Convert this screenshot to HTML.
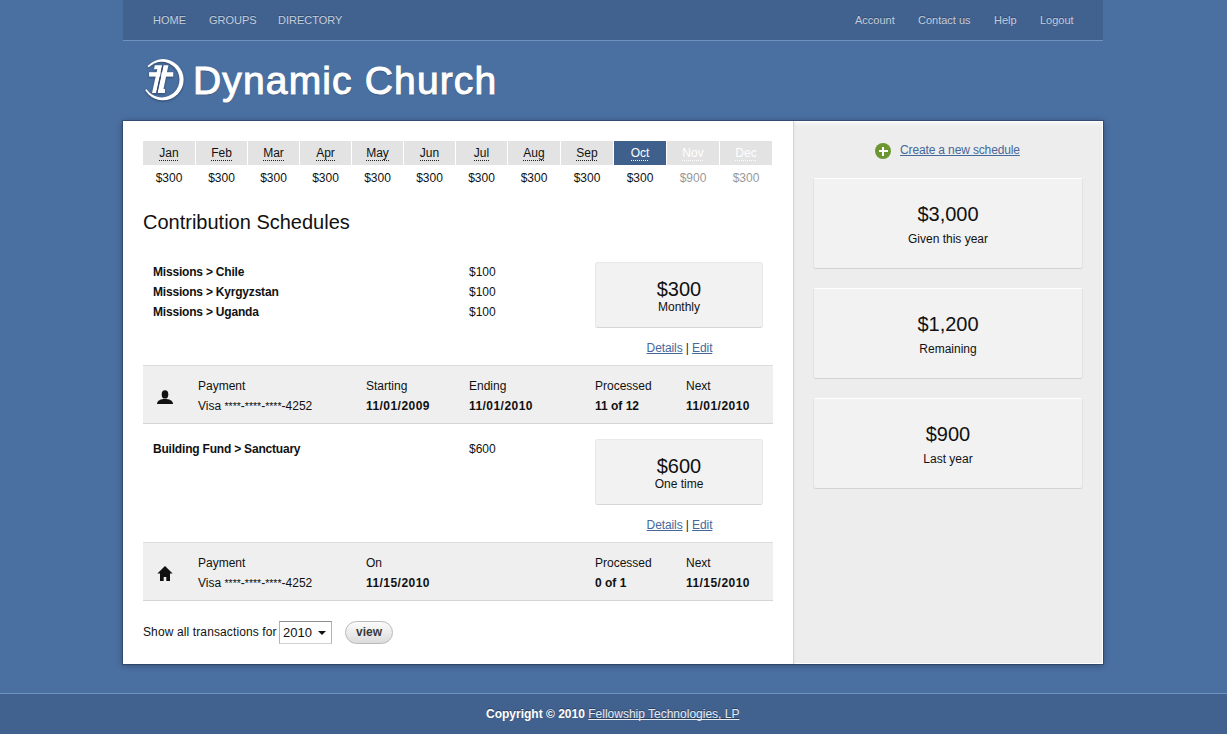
<!DOCTYPE html>
<html><head><meta charset="utf-8">
<style>
*{margin:0;padding:0;box-sizing:border-box}
html,body{width:1227px;height:734px;overflow:hidden}
body{position:relative;background:#4a6fa1;font-family:"Liberation Sans",sans-serif;color:#111;font-size:12px}
.t{position:absolute;white-space:nowrap;font-size:12px;line-height:12px;color:#111}
.b{font-weight:bold}
#nav{position:absolute;left:123px;top:0;width:980px;height:41px;background:#41618e;border-bottom:1px solid #7092bf}
.nv{position:absolute;top:15px;font-size:11px;line-height:11px;color:#c3cfdf;white-space:nowrap;text-shadow:0 -1px 0 rgba(0,0,0,.25)}
#logo{position:absolute;left:193px;top:61px;font-size:39px;font-weight:normal;-webkit-text-stroke:1px #fff;letter-spacing:1.15px;color:#fff;line-height:39px;white-space:nowrap;text-shadow:0 1px 1px rgba(0,0,0,.45)}
#panel{position:absolute;left:123px;top:121px;width:980px;height:543px;background:#fff;box-shadow:0 0 0 1px rgba(20,35,60,.35),0 1px 7px rgba(0,0,0,.35)}
#side{position:absolute;left:793px;top:121px;width:310px;height:543px;background:linear-gradient(#fff 0,#f3f3f3 2px,#ededed 6px);border-left:1px solid #d6d6d6;box-shadow:inset 2px 0 2px -1px rgba(0,0,0,.04),inset -1px -1px 0 #fff}
#footer{position:absolute;left:0;top:693px;width:1227px;height:41px;background:#41618e;border-top:1px solid #7092bf}
.tabs{position:absolute;left:143px;top:141px;width:629px;height:24px;display:flex;gap:1px}
.tab{flex:none;background:#e3e3e3;text-align:center;position:relative}
.tab span{position:relative;display:inline-block;margin-top:6px;font-size:12px;line-height:12px;color:#111}
.tab span:after{content:"";position:absolute;left:0;right:0;top:13px;height:1px;background:repeating-linear-gradient(90deg,#222 0,#222 1px,transparent 1px,transparent 2px)}
.tab.on{background:#3f5f8c}
.tab.on span{color:#fff}
.tab.on span:after{background:repeating-linear-gradient(90deg,#fff 0,#fff 1px,transparent 1px,transparent 2px)}
.tab.fut span{color:#fff}
.tab.fut span:after{background:repeating-linear-gradient(90deg,#fff 0,#fff 1px,transparent 1px,transparent 2px)}
.amts{position:absolute;left:143px;top:172px;width:629px;display:flex;gap:1px}
.amts div{flex:none;text-align:center;font-size:12px;line-height:12px;color:#111}
.amts .fut{color:#999}
.h{position:absolute;left:143px;top:212px;font-size:20px;line-height:20px;color:#111;white-space:nowrap}
.box{position:absolute;left:595px;width:168px;height:66px;background:#f2f2f2;border-radius:3px;border:1px solid #e8e8e8;border-bottom-color:#d6d6d6}
.box .big{position:absolute;left:0;right:0;top:16px;text-align:center;font-size:20px;line-height:20px;color:#111}
.box .sm{position:absolute;left:0;right:0;top:38px;text-align:center;font-size:12px;line-height:12px;color:#111}
.links{position:absolute;left:596px;width:167px;text-align:center;font-size:12px;line-height:12px;color:#223;white-space:nowrap;letter-spacing:-0.1px}
.links a{color:#46679a;text-decoration:underline;text-decoration-skip-ink:none}
.bar{position:absolute;left:143px;width:630px;height:59px;background:#efefef;border-top:1px solid #dddddd;border-bottom:1px solid #d5d5d5}
.card{position:absolute;left:813px;width:270px;height:91px;background:#f2f2f2;border-radius:3px;border:1px solid #e2e2e2;border-top-color:#fff;border-bottom-color:#d3d3d3}
.card .big{position:absolute;left:0;right:0;top:25px;text-align:center;font-size:20px;line-height:20px;color:#111}
.card .sm{position:absolute;left:0;right:0;top:54px;text-align:center;font-size:12px;line-height:12px;color:#111}
.create{position:absolute;left:900px;top:144px;font-size:12px;line-height:12px;color:#46679a;text-decoration:underline;text-decoration-skip-ink:none;white-space:nowrap;letter-spacing:-0.14px}
.plus{position:absolute;left:875px;top:143px;width:16px;height:16px;border-radius:50%;background:#6b9632}
.plus:before{content:"";position:absolute;left:3.5px;top:7px;width:9px;height:2px;background:#fff}
.plus:after{content:"";position:absolute;left:7px;top:3.5px;width:2px;height:9px;background:#fff}
.sel{position:absolute;left:279px;top:621px;width:53px;height:23px;background:#fff;border:1px solid #b4b4b4;border-top-color:#8e8e8e;border-bottom-color:#d0d0d0}
.sel span{position:absolute;left:3px;top:4px;font-size:13px;line-height:13px;color:#111}
.sel i{position:absolute;left:38px;top:9px;width:0;height:0;border-left:4px solid transparent;border-right:4px solid transparent;border-top:4px solid #111}
.btn{position:absolute;left:345px;top:621px;width:48px;height:23px;border-radius:12px;border:1px solid #b9b9b9;background:linear-gradient(#fbfbfb,#dcdcdc)}
.btn span{position:absolute;left:0;right:0;top:4px;text-align:center;font-size:12px;line-height:12px;font-weight:bold;color:#3a3a3a}
.foot{position:absolute;left:486px;top:708px;font-size:12px;line-height:12px;color:#fff;white-space:nowrap;text-shadow:0 -1px 0 rgba(0,0,0,.35)}
.foot a{font-weight:normal;color:#e6ecf4;text-decoration:underline;text-decoration-skip-ink:none}
.ast{font-size:10.5px}
</style></head><body>
<div id="nav">
  <div class="nv" style="left:30px">HOME</div>
  <div class="nv" style="left:86px">GROUPS</div>
  <div class="nv" style="left:155px">DIRECTORY</div>
  <div class="nv" style="left:732px">Account</div>
  <div class="nv" style="left:795px">Contact us</div>
  <div class="nv" style="left:871px">Help</div>
  <div class="nv" style="left:917px">Logout</div>
</div>
<svg style="position:absolute;left:140px;top:55px;filter:drop-shadow(0 1px 1px rgba(0,0,0,.35))" width="50" height="50" viewBox="0 0 50 50">
<defs><mask id="ring"><rect x="0" y="0" width="50" height="50" fill="#000"/><circle cx="23" cy="24.7" r="20.6" fill="#fff"/><circle cx="21.7" cy="24.6" r="17.8" fill="#000"/><path d="M23 24.7 L-3 39.7 L0.4 5 Z" fill="#000"/></mask></defs>
<rect x="0" y="0" width="50" height="50" fill="#fff" mask="url(#ring)"/>
<path d="M14.8 10.2 L22.1 10.2 L16.1 38.1 L12 38.1 L17.3 14.3 L14 14.3 Z" fill="#fff"/>
<path d="M23.6 10.2 L28.4 10.2 L23.5 34 L25 34 L24.9 38.1 L17.5 38.1 Z" fill="#fff"/>
<path d="M9.1 17.2 L33.2 17.2 L33.2 21.6 L9.1 21.6 Z" fill="#fff"/>
<path d="M22.85 10.2 L16.8 38.1" stroke="#2d4571" stroke-width="0.9"/>
</svg>
<div id="logo">Dynamic Church</div>
<div id="panel"></div>
<div id="side"></div>
<div id="footer"></div>

<div class="tabs"><div class="tab" style="width:52px"><span>Jan</span></div><div class="tab" style="width:51px"><span>Feb</span></div><div class="tab" style="width:51px"><span>Mar</span></div><div class="tab" style="width:51px"><span>Apr</span></div><div class="tab" style="width:51px"><span>May</span></div><div class="tab" style="width:51px"><span>Jun</span></div><div class="tab" style="width:51px"><span>Jul</span></div><div class="tab" style="width:52px"><span>Aug</span></div><div class="tab" style="width:52px"><span>Sep</span></div><div class="tab on" style="width:52px"><span>Oct</span></div><div class="tab fut" style="width:52px"><span>Nov</span></div><div class="tab fut" style="width:52px"><span>Dec</span></div></div>
<div class="amts"><div style="width:52px">$300</div><div style="width:51px">$300</div><div style="width:51px">$300</div><div style="width:51px">$300</div><div style="width:51px">$300</div><div style="width:51px">$300</div><div style="width:51px">$300</div><div style="width:52px">$300</div><div style="width:52px">$300</div><div style="width:52px">$300</div><div style="width:52px" class="fut">$900</div><div style="width:52px" class="fut">$300</div></div>
<div class="h">Contribution Schedules</div>
<div class="t b" style="left:153px;top:266px;letter-spacing:-0.2px">Missions &gt; Chile</div>
<div class="t b" style="left:153px;top:286px;letter-spacing:-0.2px">Missions &gt; Kyrgyzstan</div>
<div class="t b" style="left:153px;top:306px;letter-spacing:-0.2px">Missions &gt; Uganda</div>
<div class="t" style="left:469px;top:266px">$100</div>
<div class="t" style="left:469px;top:286px">$100</div>
<div class="t" style="left:469px;top:306px">$100</div>
<div class="box" style="top:262px"><div class="big">$300</div><div class="sm">Monthly</div></div>
<div class="links" style="top:342px"><a>Details</a> | <a>Edit</a></div>
<div class="bar" style="top:365px"></div>
<svg style="position:absolute;left:156px;top:389px" width="18" height="17" viewBox="0 0 18 17"><ellipse cx="9" cy="5.4" rx="3.3" ry="4.2" fill="#111"/><path d="M1 15 C1 11.2 5 9.9 9 9.9 C13 9.9 17 11.2 17 15 Z" fill="#111"/></svg>
<div class="t" style="left:198px;top:380px">Payment</div>
<div class="t" style="left:198px;top:400px">Visa <span class="ast">****</span>-<span class="ast">****</span>-<span class="ast">****</span>-4252</div>
<div class="t" style="left:366px;top:380px">Starting</div>
<div class="t b" style="left:366px;top:400px;letter-spacing:0.45px">11/01/2009</div>
<div class="t" style="left:469px;top:380px">Ending</div>
<div class="t b" style="left:469px;top:400px;letter-spacing:0.45px">11/01/2010</div>
<div class="t" style="left:595px;top:380px">Processed</div>
<div class="t b" style="left:595px;top:400px">11 of 12</div>
<div class="t" style="left:686px;top:380px">Next</div>
<div class="t b" style="left:686px;top:400px;letter-spacing:0.45px">11/01/2010</div>

<div class="t b" style="left:153px;top:443px;letter-spacing:-0.2px">Building Fund &gt; Sanctuary</div>
<div class="t" style="left:469px;top:443px">$600</div>
<div class="box" style="top:439px"><div class="big">$600</div><div class="sm">One time</div></div>
<div class="links" style="top:519px"><a>Details</a> | <a>Edit</a></div>
<div class="bar" style="top:542px"></div>
<svg style="position:absolute;left:156px;top:565px" width="18" height="17" viewBox="0 0 18 17"><path d="M9 1 L16.6 8.6 L14 8.6 L14 16 L10.3 16 L10.3 11.9 L7.7 11.9 L7.7 16 L4 16 L4 8.6 L1.4 8.6 Z" fill="#111"/></svg>
<div class="t" style="left:198px;top:557px">Payment</div>
<div class="t" style="left:198px;top:577px">Visa <span class="ast">****</span>-<span class="ast">****</span>-<span class="ast">****</span>-4252</div>
<div class="t" style="left:366px;top:557px">On</div>
<div class="t b" style="left:366px;top:577px;letter-spacing:0.45px">11/15/2010</div>
<div class="t" style="left:595px;top:557px">Processed</div>
<div class="t b" style="left:595px;top:577px">0 of 1</div>
<div class="t" style="left:686px;top:557px">Next</div>
<div class="t b" style="left:686px;top:577px;letter-spacing:0.45px">11/15/2010</div>

<div class="t" style="left:143px;top:626px;letter-spacing:0.12px">Show all transactions for</div>
<div class="sel"><span>2010</span><i></i></div>
<div class="btn"><span>view</span></div>

<div class="plus"></div>
<div class="create">Create a new schedule</div>
<div class="card" style="top:178px"><div class="big">$3,000</div><div class="sm">Given this year</div></div>
<div class="card" style="top:288px"><div class="big">$1,200</div><div class="sm">Remaining</div></div>
<div class="card" style="top:398px"><div class="big">$900</div><div class="sm">Last year</div></div>

<div class="foot"><b>Copyright &copy; 2010</b> <a>Fellowship Technologies, LP</a></div>
</body></html>
